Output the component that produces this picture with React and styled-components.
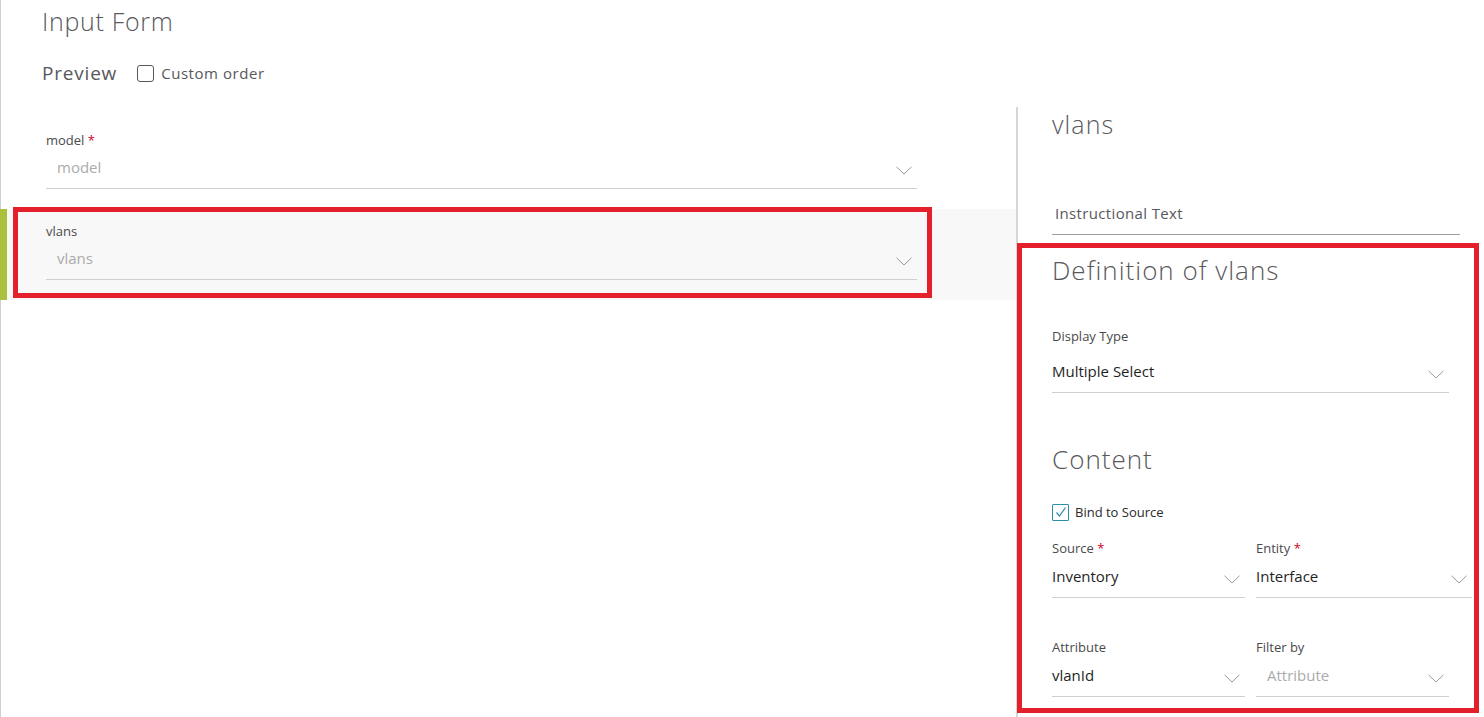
import React from "react";
import styled, { createGlobalStyle } from "styled-components";

const GlobalStyle = createGlobalStyle`
  html, body {
    margin: 0;
    padding: 0;
    background: #fff;
  }
  body {
    font-family: "Open Sans", "Liberation Sans", sans-serif;
    color: #58585b;
  }
`;

const Chevron = () => (
  <svg width="16" height="9" viewBox="0 0 16 9">
    <polyline
      points="0.5,0.8 8,8 15.5,0.8"
      fill="none"
      stroke="#9a9a9a"
      strokeWidth="1"
    />
  </svg>
);

const Field = ({ label, required, value, placeholder, height = 41, width }) => {
  return (
    <FieldWrap width={width}>
      <Label>
        {label}
        {required && <Star> *</Star>}
      </Label>
      <Select height={height}>
        <Value placeholder={placeholder ? 1 : 0}>{value}</Value>
        <ChevronBox>
          <Chevron />
        </ChevronBox>
      </Select>
    </FieldWrap>
  );
};

const App = () => {
  return (
    <>
      <GlobalStyle />
      <Page>
        <Header>
          <Title>Input Form</Title>
          <PreviewRow>
            <PreviewText>Preview</PreviewText>
            <Box />
            <CheckText>Custom order</CheckText>
          </PreviewRow>
        </Header>

        <Body>
          <LeftPanel>
            <FieldRow first>
              <Field label="model" required value="model" placeholder />
            </FieldRow>
            <FieldRow active>
              <Field label="vlans" value="vlans" placeholder />
              <Highlight />
            </FieldRow>
          </LeftPanel>

          <RightPanel>
            <PanelTitle>vlans</PanelTitle>
            <Instruction>Instructional Text</Instruction>

            <Definition>
              <SectionTitle>Definition of vlans</SectionTitle>
              <Gap h="42px" />
              <Field
                label="Display Type"
                value="Multiple Select"
                height={49}
                width="397px"
              />
              <Gap h="50px" />
              <SectionTitle>Content</SectionTitle>
              <CheckRow>
                <Box checked>
                  <svg width="14" height="14" viewBox="0 0 14 14">
                    <polyline
                      points="2.5,7.5 5.5,11 11.5,2.5"
                      fill="none"
                      stroke="#2b8ead"
                      strokeWidth="1.2"
                    />
                  </svg>
                </Box>
                <SmallText>Bind to Source</SmallText>
              </CheckRow>
              <Pair>
                <Field label="Source" required value="Inventory" height={42} width="193px" />
                <Field label="Entity" required value="Interface" height={42} width="216px" />
              </Pair>
              <Pair top="41px">
                <Field label="Attribute" value="vlanId" height={42} width="193px" />
                <Field
                  label="Filter by"
                  value="Attribute"
                  placeholder
                  height={42}
                  width="193px"
                />
              </Pair>
            </Definition>
          </RightPanel>
        </Body>
      </Page>
    </>
  );
};

const Page = styled.div`
  min-height: 100vh;
  border-left: 1px solid #cfcfcf;
  box-sizing: border-box;
  display: flex;
  flex-direction: column;
`;

const Header = styled.div`
  padding: 6px 0 22px 41px;
`;

const Title = styled.div`
  font-size: 25px;
  font-weight: 300;
  line-height: 30px;
  letter-spacing: 0.7px;
  color: #58585b;
`;

const PreviewRow = styled.div`
  display: flex;
  align-items: center;
  height: 24px;
  margin-top: 25px;
`;

const PreviewText = styled.span`
  font-size: 19px;
  line-height: 24px;
  letter-spacing: 0.8px;
  color: #58585b;
  margin-right: 20px;
`;

const Box = styled.span`
  width: 17px;
  height: 17px;
  box-sizing: border-box;
  border: 1.5px solid ${({ checked }) => (checked ? "#2b8ead" : "#58585b")};
  border-radius: ${({ checked }) => (checked ? "1px" : "3px")};
  display: inline-flex;
  align-items: center;
  justify-content: center;
  background: #fff;
`;

const CheckText = styled.span`
  font-size: 15px;
  color: #58585b;
  margin-left: 7px;
  letter-spacing: 0.55px;
`;

const Body = styled.div`
  flex: 1;
  display: flex;
`;

const LeftPanel = styled.div`
  width: 1015px;
  flex-shrink: 0;
`;

const FieldRow = styled.div`
  position: relative;
  padding: ${({ first }) => (first ? "25px" : "14px")} 99px 20px 45px;
  ${({ active }) =>
    active &&
    `
    background: #f8f8f8;
    border-left: 7px solid #a9c13c;
    margin-left: -1px;
    padding-left: 39px;
  `}
`;

const Highlight = styled.div`
  position: absolute;
  top: -2px;
  left: 6px;
  width: 919px;
  height: 91px;
  box-sizing: border-box;
  border: 5px solid #e4202d;
  pointer-events: none;
`;

const FieldWrap = styled.div`
  width: ${({ width }) => width || "auto"};
`;

const Label = styled.div`
  font-size: 13px;
  line-height: 16px;
  color: #4a4a4c;
`;

const Star = styled.span`
  color: #d0021b;
`;

const Select = styled.div`
  height: ${({ height }) => height}px;
  box-sizing: border-box;
  border-bottom: 1px solid #cfcfcf;
  display: flex;
  align-items: flex-end;
  justify-content: space-between;
  padding-bottom: 12px;
`;

const Value = styled.span`
  font-size: 15px;
  line-height: 18px;
  color: ${({ placeholder }) => (placeholder ? "#ababab" : "#1f1f1f")};
  padding-left: ${({ placeholder }) => (placeholder ? "11px" : "0")};
`;

const ChevronBox = styled.span`
  display: flex;
  margin: 0 5px 1px 0;
`;

const RightPanel = styled.div`
  flex: 1;
  border-left: 2px solid #d6d6d6;
  padding: 2px 0 0 34px;
  display: flex;
  flex-direction: column;
`;

const PanelTitle = styled.div`
  font-size: 25px;
  font-weight: 300;
  line-height: 30px;
  letter-spacing: 1.1px;
  color: #58585b;
`;

const Instruction = styled.div`
  width: 408px;
  height: 42px;
  margin-top: 54px;
  box-sizing: border-box;
  border-bottom: 1px solid #9e9e9e;
  display: flex;
  align-items: flex-end;
  padding: 0 0 12px 3px;
  font-size: 15px;
  line-height: 18px;
  color: #58585b;
  letter-spacing: 0.35px;
`;

const Definition = styled.div`
  margin: 8px 5px 4px -35px;
  border: 5px solid #e4202d;
  padding: 6px 0 11px 30px;
`;

const SectionTitle = styled.div`
  font-size: 26px;
  font-weight: 300;
  line-height: 32px;
  letter-spacing: 1px;
  color: #58585b;
`;

const Gap = styled.div`
  height: ${({ h }) => h};
`;

const CheckRow = styled.div`
  display: flex;
  align-items: center;
  margin-top: 28px;
  height: 18px;
`;

const SmallText = styled.span`
  font-size: 13px;
  color: #2a2a2a;
  margin-left: 6px;
`;

const Pair = styled.div`
  display: flex;
  gap: 11px;
  margin-top: ${({ top }) => top || "19px"};
`;

export default App;
